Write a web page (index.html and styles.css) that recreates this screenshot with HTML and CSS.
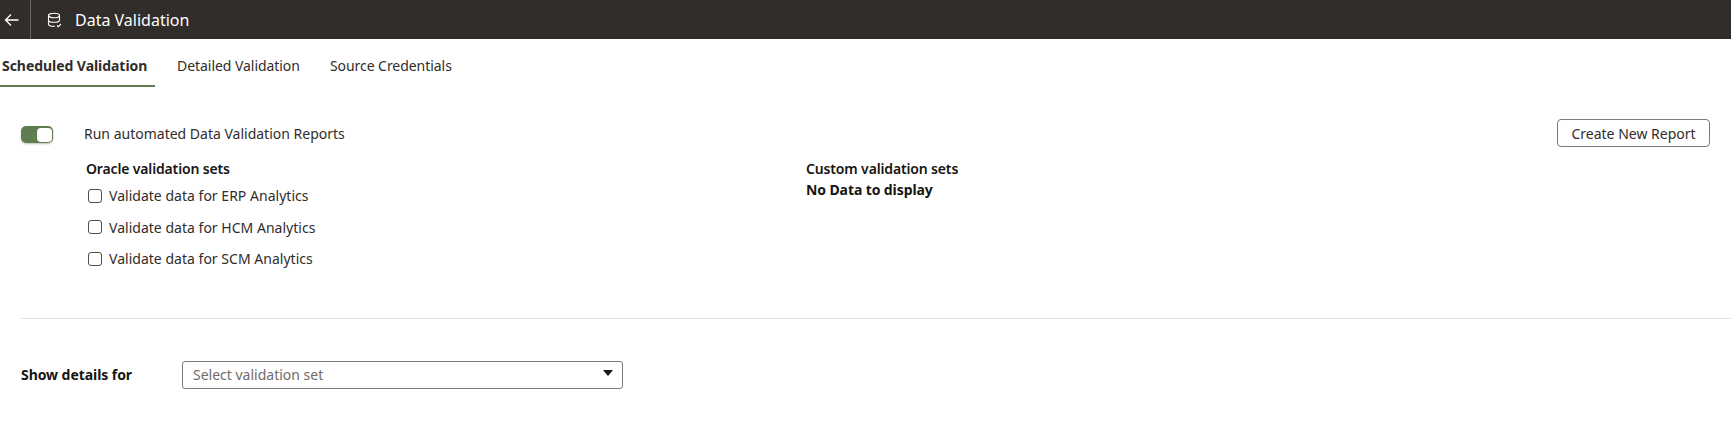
FILE: index.html
```html
<!DOCTYPE html>
<html lang="en">
<head>
  <meta charset="UTF-8" />
  <title>Data Validation</title>
  <link rel="stylesheet" href="styles.css">
</head>
<body>
  <header class="topbar">
    <button class="back-btn" aria-label="Back">
      <svg width="16" height="14" viewBox="0 0 16 14" fill="none" stroke="#fff" stroke-width="1.3">
        <path d="M14.5 7H1.5M7 1.5L1.5 7L7 12.5" />
      </svg>
    </button>
    <svg class="db-icon" width="16" height="16" viewBox="0 0 16 16" fill="none" stroke="#fff" stroke-width="1.1">
      <ellipse cx="7" cy="3.5" rx="5.5" ry="2.3" />
      <path d="M1.5 3.5V12c0 1.3 2.4 2.3 5.5 2.3h1M1.5 8c0 1.3 2.4 2.3 5.5 2.3s5.5-1 5.5-2.3M12.5 3.5V8M10 13.5l1.3 1.2 2.7-2.7" />
    </svg>
    <span class="title">Data Validation</span>
  </header>

  <nav class="tabs">
    <a class="tab active">Scheduled Validation</a>
    <a class="tab">Detailed Validation</a>
    <a class="tab">Source Credentials</a>
  </nav>

  <main class="content">
    <div class="run-row">
      <span class="toggle"><span class="knob"></span></span>
      <span class="run-label">Run automated Data Validation Reports</span>
      <button class="create-btn">Create New Report</button>
    </div>

    <div class="sets">
      <section class="oracle-sets">
        <h3>Oracle validation sets</h3>
        <label class="check"><input type="checkbox"> Validate data for ERP Analytics</label>
        <label class="check"><input type="checkbox"> Validate data for HCM Analytics</label>
        <label class="check"><input type="checkbox"> Validate data for SCM Analytics</label>
      </section>
      <section class="custom-sets">
        <h3>Custom validation sets</h3>
        <p>No Data to display</p>
      </section>
    </div>

    <hr class="divider">

    <div class="details-row">
      <span class="details-label">Show details for</span>
      <div class="select">
        <span class="placeholder">Select validation set</span>
        <span class="arrow"></span>
      </div>
    </div>
  </main>
</body>
</html>
```

FILE: styles.css
```css
body {
  margin: 0;
  font-family: "Noto Sans", Arial, sans-serif;
  font-size: 14px;
  color: #161513;
  background: #fff;
}

.topbar {
  height: 39px;
  background: #312d2a;
  display: flex;
  align-items: center;
  color: #fff;
}
.back-btn {
  width: 31px;
  height: 39px;
  padding: 0 0 0 4px;
  background: none;
  border: 0;
  border-right: 1px solid #6b6764;
  display: flex;
  align-items: center;
}
.db-icon {
  margin-left: 16px;
}
.title {
  margin-left: 12px;
  font-size: 16px;
}

.tabs {
  height: 47px;
  display: flex;
  gap: 14px;
}
.tab {
  padding: 0 8px;
  line-height: 53px;
  height: 46px;
  color: #312d2a;
  letter-spacing: -0.05px;
}
.tab.active {
  width: 146px;
  padding: 0 7px 0 2px;
  font-weight: 700;
  white-space: nowrap;
  border-bottom: 2px solid #5f7d4f;
}

.content {
  padding: 33px 21px 0;
}

.run-row {
  display: flex;
  align-items: center;
  height: 28px;
  color: #312d2a;
}
.toggle {
  width: 32px;
  height: 17px;
  margin-top: 3px;
  background: #5f7d4f;
  border-radius: 5px;
  box-shadow: 0 1px 2px rgba(0,0,0,0.25);
  box-sizing: border-box;
  padding: 2px 1px 1px 2px;
  display: flex;
  justify-content: flex-end;
}
.knob {
  width: 15px;
  height: 14px;
  background: #fff;
  border-radius: 4px;
}
.run-label {
  margin-left: 31px;
}
.create-btn {
  margin-left: auto;
  width: 153px;
  height: 28px;
  background: #fff;
  border: 1px solid #7d7975;
  border-radius: 4px;
  font-family: inherit;
  font-size: 14px;
  color: #312d2a;
  padding: 0;
}

.sets {
  display: flex;
  margin-top: 11px;
  height: 160px;
}
.sets h3 {
  margin: 0;
  font-size: 14px;
  font-weight: 600;
  letter-spacing: -0.15px;
  line-height: 21px;
}
.oracle-sets {
  width: 720px;
  margin-left: 65px;
}
.check {
  display: flex;
  align-items: center;
  gap: 7px;
  height: 21px;
  margin-bottom: 10.5px;
  color: #312d2a;
  letter-spacing: 0.02px;
}
.oracle-sets h3 {
  margin-bottom: 6px;
}
.check input {
  appearance: none;
  width: 14px;
  height: 14px;
  margin: 0 0 0 2px;
  border: 1.5px solid #4f4c49;
  border-radius: 3px;
  background: #fff;
}
.custom-sets p {
  margin: 0;
  font-weight: 700;
  letter-spacing: -0.1px;
  line-height: 21px;
}

.divider {
  margin: 0 -21px 0 0;
  border: 0;
  border-top: 1px solid #e4e2e0;
}

.details-row {
  display: flex;
  align-items: center;
  margin-top: 42px;
}
.details-label {
  width: 161px;
  font-weight: 700;
  letter-spacing: -0.06px;
  margin-top: -2px;
}
.select {
  width: 441px;
  height: 28px;
  box-sizing: border-box;
  border: 1px solid #7d7975;
  border-radius: 3px;
  padding: 0 9px 0 10px;
  display: flex;
  align-items: center;
  justify-content: space-between;
  color: #6f6c69;
}
.placeholder {
  margin-top: -2px;
}
.arrow {
  width: 0;
  height: 0;
  border-left: 5px solid transparent;
  border-right: 5px solid transparent;
  border-top: 6px solid #161513;
  margin-top: -4px;
}
```
